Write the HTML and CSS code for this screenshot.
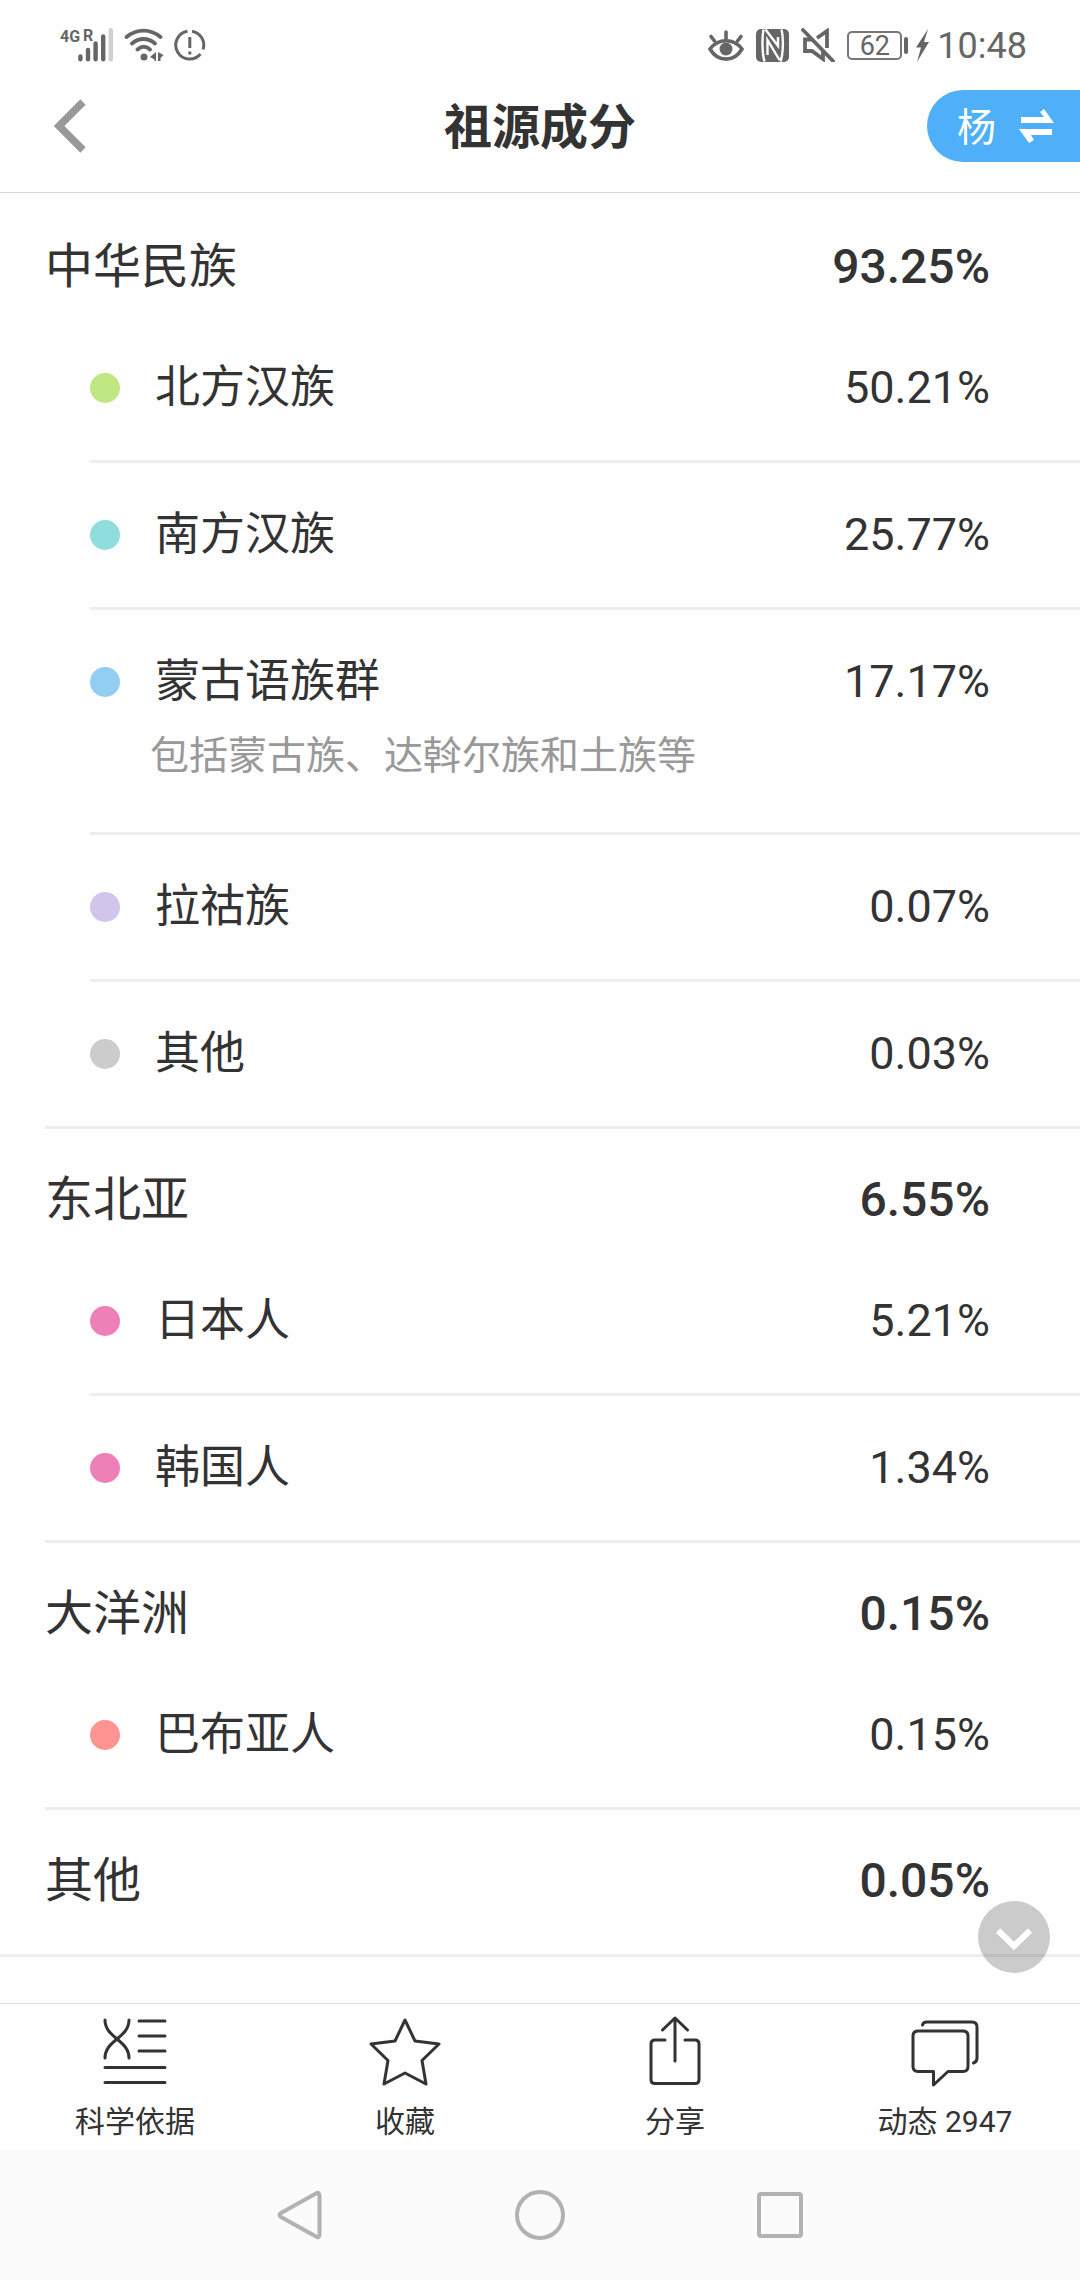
FILE: index.html
```html
<!DOCTYPE html>
<html lang="zh-CN">
<head>
    <meta charset="UTF-8">
    <meta name="viewport" content="width=device-width, initial-scale=1.0">
    <title>祖源成分</title>
    <link rel="stylesheet" href="styles.css">
</head>
<body>
    <div class="status-bar">
        <div class="status-left">
            <svg class="signal" width="54" height="34" viewBox="0 0 54 34">
                <text class="net" x="0" y="14">4G</text>
                <text class="net" x="23" y="13">R</text>
                <g stroke="#666" stroke-width="4.4" stroke-linecap="round">
                    <path d="M20.4 28.5V31.2M28 22V31.2M35.6 15.5V31.2M43.2 8.5V31.2"/>
                    <path stroke="#d0d0d0" d="M50.8 2.2V31.2"/>
                </g>
            </svg>
            <svg width="40" height="34" viewBox="0 0 40 34" fill="none" stroke="#666" stroke-width="3.8" stroke-linecap="round">
                <path d="M2.5 9C13 .5 26 .5 36.5 9M8 15.5C15 9.5 24 9.5 31 15.5M13.500 21.500C17.500 18 22 18 26 21.500"/>
                <circle cx="20" cy="29" r="3.500" fill="#666" stroke="none"/>
                <path d="M26 29L32 24V33H30.500V31.500ZM34 24L39.500 27L36.500 30V33H34Z" fill="#666" stroke="none"/>
            </svg>
            <svg width="32" height="34" viewBox="0 0 32 34" fill="none" stroke="#666" stroke-width="3">
                <path d="M18 3.200A14 14 0 0 1 29 21.500M26.500 26A14 14 0 1 1 13.500 3.200"/>
                <path d="M15.800 9V20M15.800 23.500V26.500"/>
            </svg>
        </div>
        <div class="status-right">
            <svg width="36" height="34" viewBox="0 0 36 34" fill="none" stroke="#666" stroke-width="3.600" stroke-linecap="round">
                <path d="M2 21C10 10 26 10 34 21C26 34.500 10 34.500 2 21Z"/>
                <circle cx="18" cy="21" r="6.500" fill="#666" stroke="none"/>
                <path d="M18 4V11M3 8.500L6.500 13M33 8.500L29.500 13"/>
            </svg>
            <svg width="33" height="34" viewBox="0 0 33 34">
                <rect y="1" width="33" height="33" rx="5" fill="#666"/>
                <path d="M7.500 1.500C6 9 6 25 8.500 33.500M25.500 1.500C27.500 9 27.500 25 24.500 33.500M9.500 1.500L22 18V9M11.500 27V12L23.500 32" fill="none" stroke="#fefefe" stroke-width="2.400"/>
            </svg>
            <svg width="34" height="34" viewBox="0 0 34 34" fill="none" stroke="#666" stroke-width="3.800">
                <path d="M26 20V3L16 10M11 11.500H4V23H11L22 31V23"/>
                <path d="M2 2L32 33" stroke-linecap="round"/>
            </svg>
            <div class="power">
                <span class="battery">62</span>
                <svg width="13" height="34" viewBox="0 0 13 34">
                    <path d="M12 1L0 19.500H5L1 34L13 14H8Z" fill="#666"/>
                </svg>
                <span class="time">10:48</span>
            </div>
        </div>
    </div>

    <header class="header">
        <button class="back" aria-label="返回">
            <svg width="32" height="54" viewBox="0 0 32 54" fill="none" stroke="#999" stroke-width="7.500">
                <path d="M29 3L5 27L29 51"/>
            </svg>
        </button>
        <h1>祖源成分</h1>
        <button class="switch">
            <span>杨</span>
            <svg width="35" height="34" viewBox="0 0 35 34" fill="#fff">
                <path d="M2 8H25L21 3L25 0L35 14H2ZM0 20H33V26H12L15 31L10 34Z"/>
            </svg>
        </button>
    </header>

    <main class="content">
        <section class="group">
            <h2>中华民族 <b>93.25%</b></h2>
            <ul>
                <li><i class="dot green"></i><span>北方汉族</span><span class="num">50.21%</span></li>
                <li><i class="dot teal"></i><span>南方汉族</span><span class="num">25.77%</span></li>
                <li><i class="dot blue"></i><span>蒙古语族群</span><span class="num">17.17%</span>
                    <p>包括蒙古族、达斡尔族和土族等</p></li>
                <li><i class="dot purple"></i><span>拉祜族</span><span class="num">0.07%</span></li>
                <li><i class="dot gray"></i><span>其他</span><span class="num">0.03%</span></li>
            </ul>
        </section>
        <section class="group">
            <h2>东北亚 <b>6.55%</b></h2>
            <ul>
                <li><i class="dot pink"></i><span>日本人</span><span class="num">5.21%</span></li>
                <li><i class="dot pink"></i><span>韩国人</span><span class="num">1.34%</span></li>
            </ul>
        </section>
        <section class="group">
            <h2>大洋洲 <b>0.15%</b></h2>
            <ul>
                <li><i class="dot coral"></i><span>巴布亚人</span><span class="num">0.15%</span></li>
            </ul>
        </section>
        <section class="group single">
            <h2>其他 <b>0.05%</b></h2>
        </section>
    </main>

    <footer class="toolbar">
        <button class="scroll-down" aria-label="向下">
            <svg width="72" height="72" viewBox="0 0 72 72" fill="none" stroke="#fff" stroke-width="6">
                <path d="M20 29.500L36 45L52 29.500"/>
            </svg>
        </button>
        <button class="tool">
            <svg class="line-icon" width="72" height="72" viewBox="0 0 72 72">
                <path d="M6 5C6 14 12 19 18 24C24 29 30 34 30 43M30 5C30 14 24 19 18 24C12 29 6 34 6 43"/>
                <path d="M40 6H66M40 21H66M40 36H66M6 52.500H66M6 67.500H66"/>
            </svg>
            科学依据
        </button>
        <button class="tool">
            <svg class="line-icon" width="72" height="72" viewBox="0 0 72 72">
                <path d="M36 5L46 26L70 29L53 45.500L57 69L36 58L15 69L19 45.500L2 29L26 26Z"/>
            </svg>
            收藏
        </button>
        <button class="tool">
            <svg class="line-icon" width="72" height="72" viewBox="0 0 72 72">
                <path d="M36 46V3M23.500 15L36 3L48.500 15"/>
                <path d="M26 25H16Q12 25 12 29V64.500Q12 68.500 16 68.500H56Q60 68.500 60 64.500V29Q60 25 56 25H46"/>
            </svg>
            分享
        </button>
        <button class="tool">
            <svg class="line-icon" width="72" height="72" viewBox="0 0 72 72">
                <path d="M9 16H54Q59 16 59 21V51.500Q59 56.500 54 56.500H39L24.500 70V56.500H9Q4 56.500 4 51.500V21Q4 16 9 16Z"/>
                <path d="M13.500 10Q14 7 18 7H63Q68 7 68 12V43Q68 47 64.500 48"/>
            </svg>
            动态 2947
        </button>
    </footer>

    <nav class="system-nav">
        <button aria-label="后退">
            <svg width="50" height="50" viewBox="0 0 50 50"><path d="M41 3.500Q44.500 1.500 44.500 6V44.500Q44.500 48.500 41 46.500L6 27Q3 25 6 23Z"/></svg>
        </button>
        <button aria-label="主页">
            <svg width="50" height="50" viewBox="0 0 50 50"><circle cx="25" cy="25" r="23"/></svg>
        </button>
        <button aria-label="最近任务">
            <svg width="50" height="50" viewBox="0 0 50 50"><rect x="4" y="4" width="42" height="42" rx="2"/></svg>
        </button>
    </nav>
</body>
</html>
```
FILE: styles.css
```css
* {
    box-sizing: border-box;
}

body {
    margin: 0;
    min-height: 100vh;
    display: flex;
    flex-direction: column;
    font-family: Roboto, "Noto Sans CJK SC", sans-serif;
    color: #333;
    background-color: #fefefe;
}

button {
    padding: 0;
    border: none;
    background: none;
    font-family: inherit;
    color: inherit;
    cursor: pointer;
}

svg {
    display: block;
}

h1, h2, ul, p {
    margin: 0;
    padding: 0;
}

/* status bar */
.status-bar {
    display: flex;
    justify-content: space-between;
    height: 81px;
    padding: 9px 53px 0 60px;
    color: #666;
}

.status-left,
.status-right,
.power {
    display: flex;
    align-items: center;
    gap: 10px;
}

.status-right {
    gap: 12px;
}

.power {
    gap: 8px;
}

.signal {
    overflow: visible;
}

.net {
    font-size: 16px;
    font-weight: bold;
    fill: #666;
}

.battery {
    position: relative;
    width: 55px;
    height: 29px;
    margin-right: 6px;
    border: 2px solid #777;
    border-radius: 5px;
    font-size: 27px;
    line-height: 26px;
    text-align: center;
}

.battery::after {
    content: "";
    position: absolute;
    top: 4px;
    right: -8px;
    width: 4px;
    height: 17px;
    border-radius: 2px;
    background-color: #666;
}

.time {
    padding-top: 2px;
    font-size: 36px;
    line-height: 36px;
}

/* header */
.header {
    display: grid;
    grid-template-columns: 1fr auto 1fr;
    align-items: center;
    padding: 9px 0 30px;
    border-bottom: 1px solid #d4d4d4;
}

.back {
    justify-self: start;
    padding: 0 54px;
}

.header h1,
.switch span {
    padding-top: 4px;
    line-height: 68px;
}

.header h1 {
    font-size: 48px;
}

.switch {
    justify-self: end;
    display: flex;
    align-items: center;
    gap: 23px;
    height: 72px;
    padding: 0 26px 0 30px;
    border-radius: 36px 0 0 36px;
    background-color: #4faff8;
    color: #fff;
    font-size: 39px;
}

/* list */
.content {
    flex: 1;
    padding-top: 3px;
}

.group h2 {
    display: flex;
    justify-content: space-between;
    padding: 35px 90px 13px 45px;
    font-size: 48px;
    font-weight: normal;
    line-height: 72px;
}

.group b {
    font-weight: 500;
}

.group ul {
    list-style: none;
}

.group li {
    display: grid;
    grid-template-columns: 30px 1fr auto;
    column-gap: 35px;
    align-items: center;
    margin-left: 90px;
    padding: 36px 90px 36px 0;
    border-bottom: 3px solid #ebeef0;
    font-size: 45px;
    line-height: 72px;
}

.group li:last-child {
    margin-left: 45px;
    padding-left: 45px;
}

.group p {
    grid-column: 1 / -1;
    padding: 2px 0 4px 60px;
    color: #999;
    font-size: 39px;
}

.single {
    border-bottom: 3px solid #ebeef0;
}

.single h2 {
    padding-bottom: 37px;
}

.dot {
    width: 30px;
    height: 30px;
    border-radius: 50%;
}

.green { background-color: #c0e882; }
.teal { background-color: #8fdedd; }
.blue { background-color: #92cdf2; }
.purple { background-color: #d1c5ea; }
.gray { background-color: #ccc; }
.pink { background-color: #ee80b8; }
.coral { background-color: #ff9492; }

/* bottom toolbar */
.toolbar {
    position: relative;
    display: flex;
    border-top: 1px solid #ddd;
}

.tool {
    flex: 1;
    display: flex;
    flex-direction: column;
    align-items: center;
    gap: 17px;
    padding: 11px 0 10px;
    font-size: 30px;
    line-height: 36px;
}

.line-icon {
    fill: none;
    stroke: #333;
    stroke-width: 3;
    stroke-linecap: round;
    stroke-linejoin: round;
}

.scroll-down {
    position: absolute;
    right: 30px;
    bottom: calc(100% + 31px);
    border-radius: 50%;
    background-color: rgba(0, 0, 0, 0.2);
}

/* system keys */
.system-nav {
    display: flex;
    justify-content: center;
    height: 130px;
    background-color: #fbfbfb;
}

.system-nav button {
    width: 240px;
}

.system-nav svg {
    margin: 0 auto;
    fill: none;
    stroke: #b2b2b2;
    stroke-width: 4;
}
```
